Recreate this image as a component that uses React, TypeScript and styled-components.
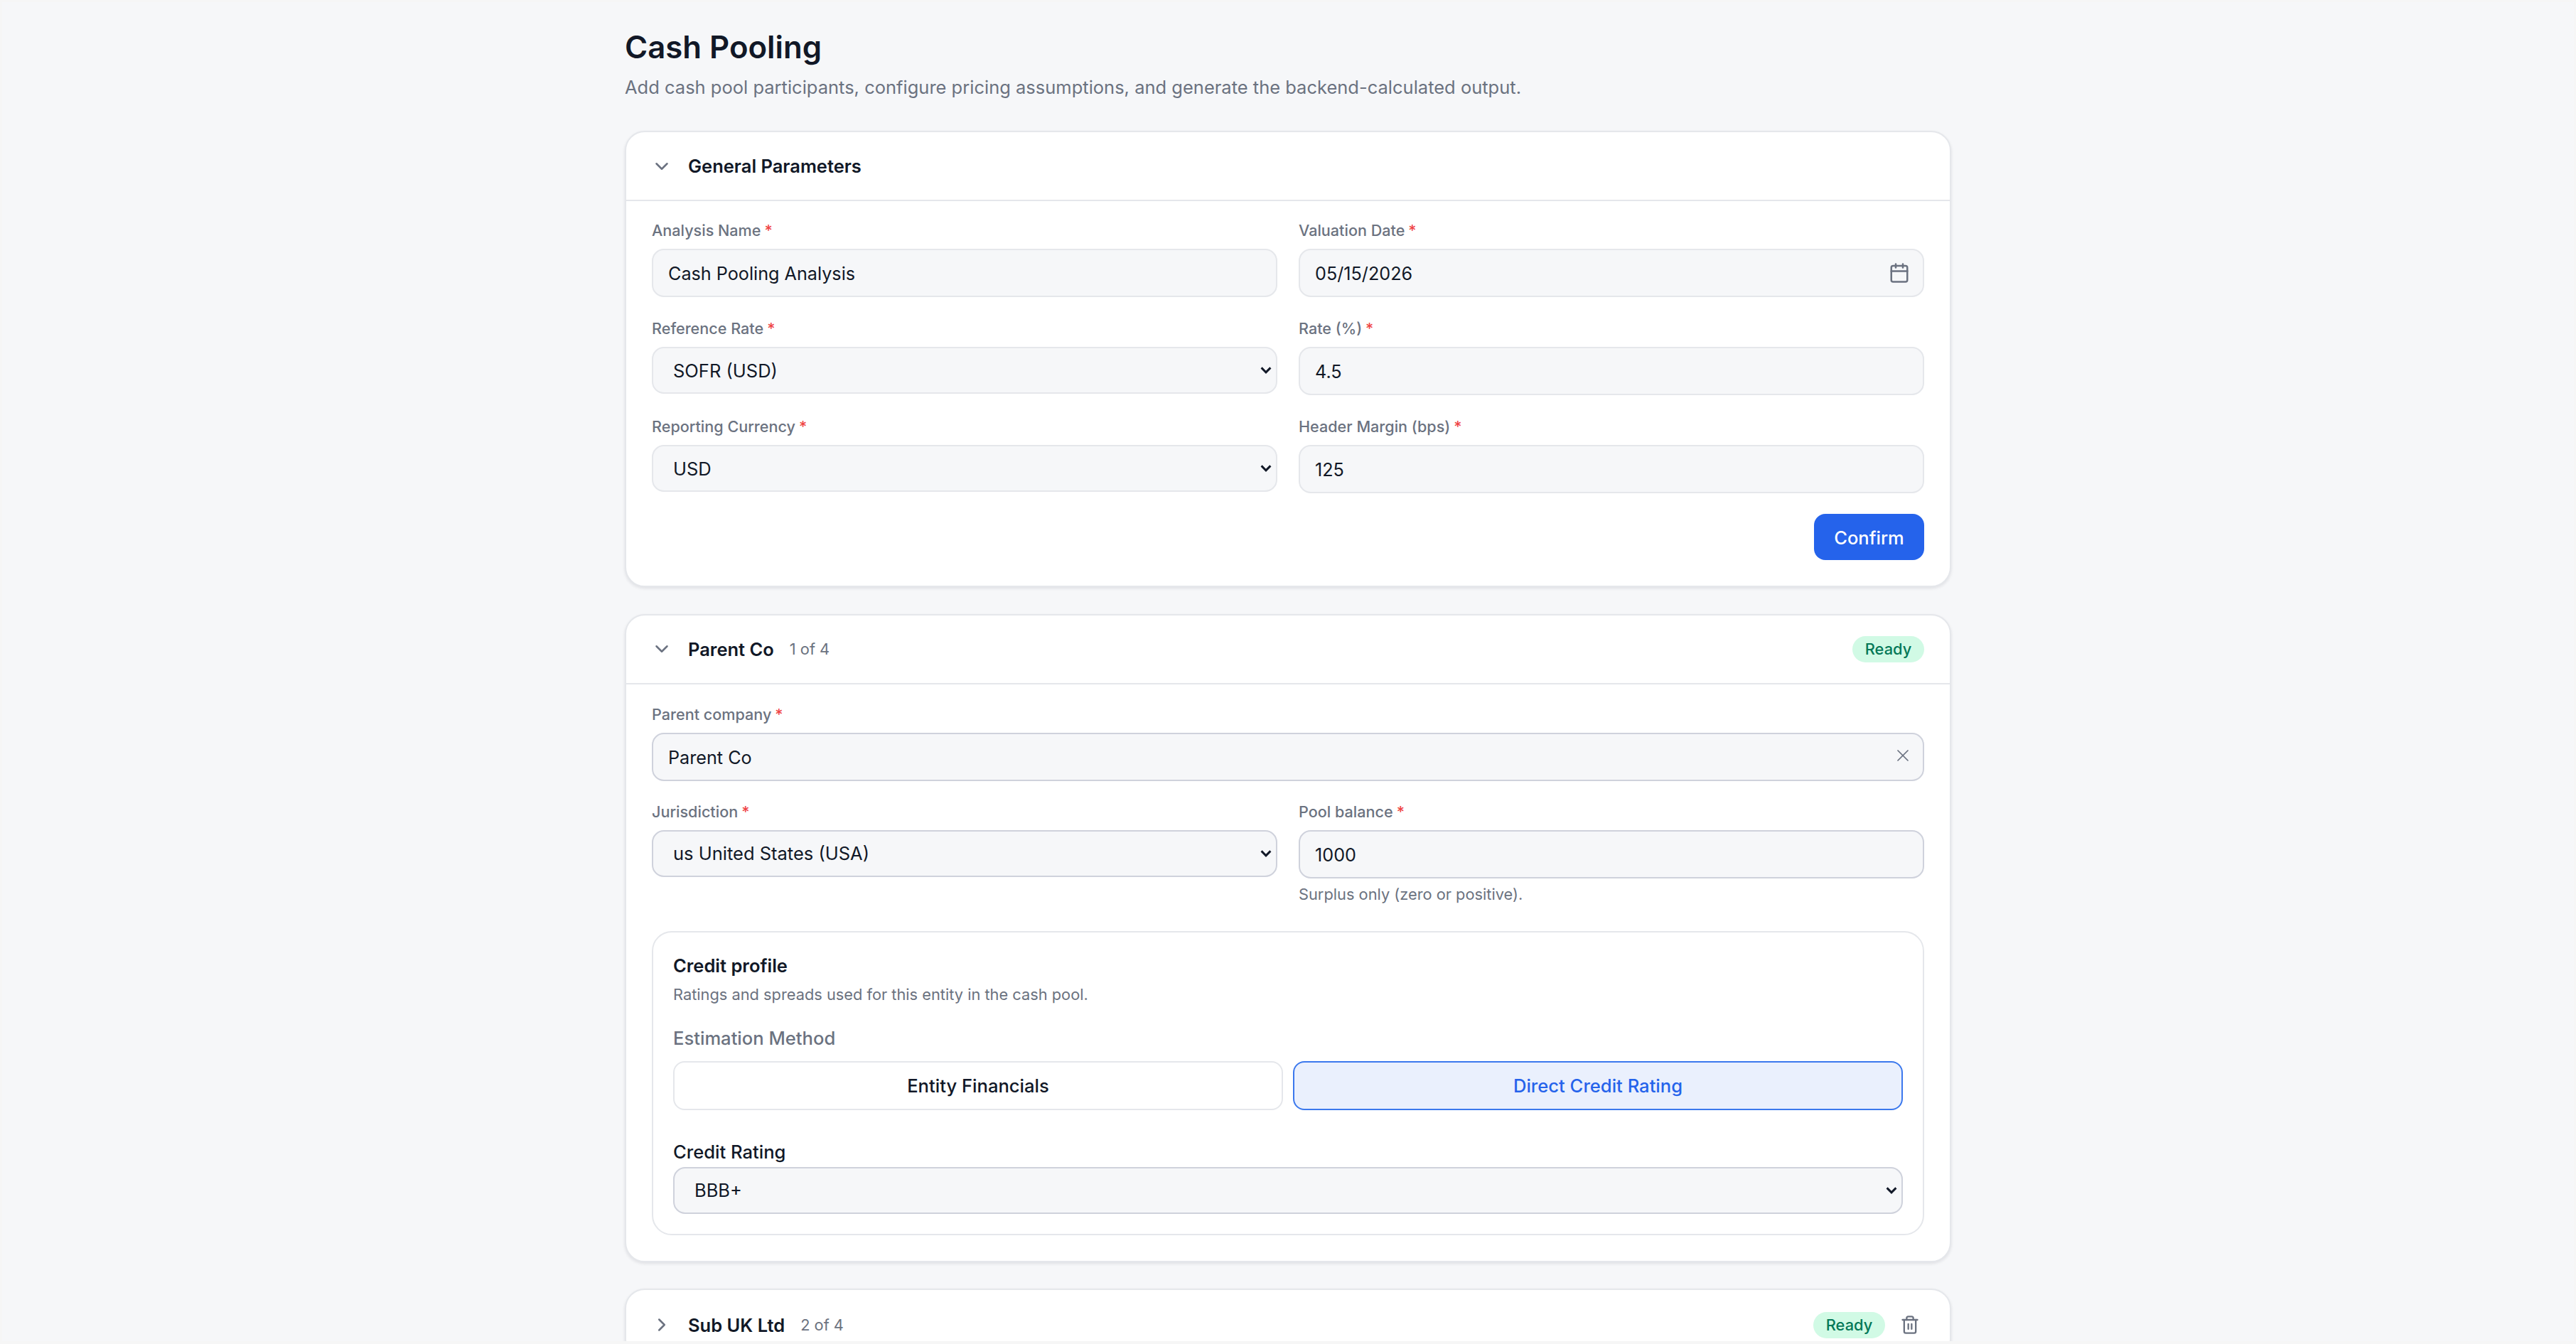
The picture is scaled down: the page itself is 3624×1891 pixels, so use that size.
import React from 'react'
import styled, { createGlobalStyle } from 'styled-components'
import { Calendar, ChevronDown, ChevronRight, Trash2, X } from 'lucide-react'

const arrowIcon = encodeURIComponent(
    '<svg xmlns="http://www.w3.org/2000/svg" width="16" height="10" viewBox="0 0 16 10"><path d="M1.6 1.4 8 7.8l6.4-6.4" fill="none" stroke="#111827" stroke-width="3"/></svg>'
)

const GlobalStyle = createGlobalStyle`
    html, body {
        margin: 0;
        height: 100%;
        overflow: hidden;
        background: #f6f7f9;
    }
    * {
        box-sizing: border-box;
    }
    body {
        font-family: Inter, 'Liberation Sans', sans-serif;
        color: #111827;
    }
`

const Frame = styled.div`
    position: fixed;
    inset: 0;
    border: solid #f6f6f6;
    border-width: 3px 3px 4px;
    pointer-events: none;
`

const Page = styled.div`
    width: 1866px;
    margin: 0 auto;
    padding-top: 42px;
`

const Title = styled.h1`
    margin: 0;
    font-size: 43.7px;
    line-height: 50px;
    font-weight: 600;
`

const Subtitle = styled.p`
    margin: 12.5px 0 44.5px;
    font-size: 25.5px;
    line-height: 35px;
    color: #6b7280;
`

const Card = styled.section`
    background: #fff;
    border: 2px solid #e5e7eb;
    border-radius: 28px;
    box-shadow: 0 2px 4px rgba(17, 24, 39, 0.1);
    margin-bottom: 37.5px;
`

const CardHeader = styled.header<{ $collapsed?: boolean }>`
    display: flex;
    align-items: center;
    height: 95px;
    padding: ${(p) => (p.$collapsed ? '3px' : '0')} 36px 0;
`

const Toggle = styled.span`
    display: flex;
    justify-content: center;
    width: 34px;
    margin-left: -3px;
    margin-right: 20px;
    color: #6b7280;
`

const CardTitle = styled.h2`
    margin: 0;
    font-size: 25.5px;
    line-height: 33px;
    font-weight: 600;
`

const Count = styled.span`
    margin-left: 22px;
    font-size: 21.8px;
    color: #6b7280;
`

const HeaderEnd = styled.div`
    display: flex;
    align-items: center;
    gap: 21px;
    margin-left: auto;
`

const Badge = styled.span`
    display: inline-flex;
    align-items: center;
    justify-content: center;
    width: 101px;
    height: 37px;
    border-radius: 19px;
    background: #d1fae5;
    color: #047857;
    font-size: 21.8px;
    font-weight: 500;
`

const TrashButton = styled.span`
    display: flex;
    margin-right: 6px;
    color: #6b7280;
`

const CardBody = styled.div<{ $top: number }>`
    border-top: 2px solid #e5e7eb;
    padding: ${(p) => p.$top}px 36px 36px;
`

const FieldGrid = styled.div<{ $rowGap: number }>`
    display: grid;
    grid-template-columns: 1fr 1fr;
    column-gap: 30px;
    row-gap: ${(p) => p.$rowGap}px;
    align-items: start;
`

const Field = styled.div<{ $wide?: boolean }>`
    grid-column: ${(p) => (p.$wide ? '1 / -1' : 'auto')};
    min-width: 0;
`

const Label = styled.label`
    display: block;
    margin-bottom: 12px;
    font-size: 21.6px;
    line-height: 28px;
    font-weight: 500;
    color: #6b7280;
`

const Required = styled.span`
    margin-left: 5px;
    color: #ef4444;
`

const InputShell = styled.div`
    position: relative;
`

const Input = styled.input<{ $strong?: boolean }>`
    display: block;
    width: 100%;
    height: 68px;
    padding: 2px 60px 0 21px;
    border: 2px solid ${(p) => (p.$strong ? '#cfd2dc' : '#e5e7eb')};
    border-radius: 17px;
    background: #f6f7f9;
    font: 400 25.2px Inter, sans-serif;
    color: #111827;
    outline: none;
`

const InputIcon = styled.span<{ $right: number; $shiftY?: number }>`
    position: absolute;
    top: 50%;
    right: ${(p) => p.$right}px;
    display: flex;
    transform: translateY(calc(-50% + ${(p) => p.$shiftY ?? 0}px));
    color: #6b7280;
`

const Select = styled.select<{ $strong?: boolean }>`
    display: block;
    width: 100%;
    height: 66px;
    padding: 0 40px 0 28px;
    appearance: none;
    border: 2px solid ${(p) => (p.$strong ? '#cfd2dc' : '#e5e7eb')};
    border-radius: 17px;
    background: #f6f7f9 url('data:image/svg+xml,${arrowIcon}') no-repeat right 6px center;
    font: 400 25.5px Inter, sans-serif;
    color: #111827;
    outline: none;
`

const Hint = styled.p`
    margin: 8px 0 0;
    font-size: 21.8px;
    line-height: 28px;
    color: #6b7280;
`

const Actions = styled.div`
    display: flex;
    justify-content: flex-end;
    margin-top: 29px;
`

const PrimaryButton = styled.button`
    width: 155px;
    height: 65px;
    padding: 1px 0 0;
    border: 0;
    border-radius: 16px;
    background: #2563eb;
    color: #fff;
    font: 500 25.5px Inter, sans-serif;
`

const Profile = styled.div`
    margin-top: 38px;
    padding: 30px 28px 28px;
    border: 2px solid #e5e7eb;
    border-radius: 28px;
`

const ProfileTitle = styled.h3`
    margin: 0;
    font-size: 25.5px;
    line-height: 34px;
    font-weight: 600;
`

const ProfileNote = styled.p`
    margin: 9px 0 0;
    font-size: 21.8px;
    line-height: 28px;
    color: #6b7280;
`

const MethodLabel = styled.div`
    margin-top: 31px;
    font-size: 25.6px;
    line-height: 34px;
    font-weight: 500;
    color: #6b7280;
`

const MethodGrid = styled.div`
    display: grid;
    grid-template-columns: 1fr 1fr;
    gap: 14px;
    margin-top: 15px;
`

const MethodButton = styled.button<{ $active?: boolean }>`
    height: 69px;
    border: 2px solid ${(p) => (p.$active ? '#3b78ed' : '#e5e7eb')};
    border-radius: 16px;
    background: ${(p) => (p.$active ? '#eaf0fd' : '#fff')};
    color: ${(p) => (p.$active ? '#2563eb' : '#111827')};
    font: 500 25.6px Inter, sans-serif;
`

const RatingLabel = styled.label`
    display: block;
    margin: 42px 0 4px;
    font-size: 25.6px;
    line-height: 34px;
    font-weight: 500;
`

const Star = () => <Required>*</Required>

const App: React.FC = () => {
    return (
        <>
            <GlobalStyle />
            <Page>
                <Title>Cash Pooling</Title>
                <Subtitle>
                    Add cash pool participants, configure pricing assumptions, and generate the backend-calculated
                    output.
                </Subtitle>

                <Card>
                    <CardHeader>
                        <Toggle>
                            <ChevronDown size={30} strokeWidth={2} />
                        </Toggle>
                        <CardTitle>General Parameters</CardTitle>
                    </CardHeader>
                    <CardBody $top={27}>
                        <FieldGrid $rowGap={30}>
                            <Field>
                                <Label>
                                    Analysis Name
                                    <Star />
                                </Label>
                                <Input defaultValue="Cash Pooling Analysis" />
                            </Field>
                            <Field>
                                <Label>
                                    Valuation Date
                                    <Star />
                                </Label>
                                <InputShell>
                                    <Input defaultValue="05/15/2026" />
                                    <InputIcon $right={20}>
                                        <Calendar size={30} strokeWidth={2} />
                                    </InputIcon>
                                </InputShell>
                            </Field>
                            <Field>
                                <Label>
                                    Reference Rate
                                    <Star />
                                </Label>
                                <Select defaultValue="SOFR (USD)">
                                    <option>SOFR (USD)</option>
                                </Select>
                            </Field>
                            <Field>
                                <Label>
                                    Rate (%)
                                    <Star />
                                </Label>
                                <Input defaultValue="4.5" />
                            </Field>
                            <Field>
                                <Label>
                                    Reporting Currency
                                    <Star />
                                </Label>
                                <Select defaultValue="USD">
                                    <option>USD</option>
                                </Select>
                            </Field>
                            <Field>
                                <Label>
                                    Header Margin (bps)
                                    <Star />
                                </Label>
                                <Input defaultValue="125" />
                            </Field>
                        </FieldGrid>
                        <Actions>
                            <PrimaryButton>Confirm</PrimaryButton>
                        </Actions>
                    </CardBody>
                </Card>

                <Card>
                    <CardHeader>
                        <Toggle>
                            <ChevronDown size={30} strokeWidth={2} />
                        </Toggle>
                        <CardTitle>Parent Co</CardTitle>
                        <Count>1 of 4</Count>
                        <HeaderEnd>
                            <Badge>Ready</Badge>
                        </HeaderEnd>
                    </CardHeader>
                    <CardBody $top={28}>
                        <FieldGrid $rowGap={29}>
                            <Field $wide>
                                <Label>
                                    Parent company
                                    <Star />
                                </Label>
                                <InputShell>
                                    <Input $strong defaultValue="Parent Co" />
                                    <InputIcon $right={16} $shiftY={-2}>
                                        <X size={28} strokeWidth={1.5} />
                                    </InputIcon>
                                </InputShell>
                            </Field>
                            <Field>
                                <Label>
                                    Jurisdiction
                                    <Star />
                                </Label>
                                <Select $strong defaultValue="us United States (USA)">
                                    <option>us United States (USA)</option>
                                </Select>
                            </Field>
                            <Field>
                                <Label>
                                    Pool balance
                                    <Star />
                                </Label>
                                <Input $strong defaultValue="1000" />
                                <Hint>Surplus only (zero or positive).</Hint>
                            </Field>
                        </FieldGrid>
                        <Profile>
                            <ProfileTitle>Credit profile</ProfileTitle>
                            <ProfileNote>Ratings and spreads used for this entity in the cash pool.</ProfileNote>
                            <MethodLabel>Estimation Method</MethodLabel>
                            <MethodGrid>
                                <MethodButton>Entity Financials</MethodButton>
                                <MethodButton $active>Direct Credit Rating</MethodButton>
                            </MethodGrid>
                            <RatingLabel>Credit Rating</RatingLabel>
                            <Select $strong defaultValue="BBB+">
                                <option>BBB+</option>
                            </Select>
                        </Profile>
                    </CardBody>
                </Card>

                <Card>
                    <CardHeader $collapsed>
                        <Toggle>
                            <ChevronRight size={30} strokeWidth={2} />
                        </Toggle>
                        <CardTitle>Sub UK Ltd</CardTitle>
                        <Count>2 of 4</Count>
                        <HeaderEnd>
                            <Badge>Ready</Badge>
                            <TrashButton>
                                <Trash2 size={28} strokeWidth={2} />
                            </TrashButton>
                        </HeaderEnd>
                    </CardHeader>
                </Card>
            </Page>
            <Frame />
        </>
    )
}

export default App
